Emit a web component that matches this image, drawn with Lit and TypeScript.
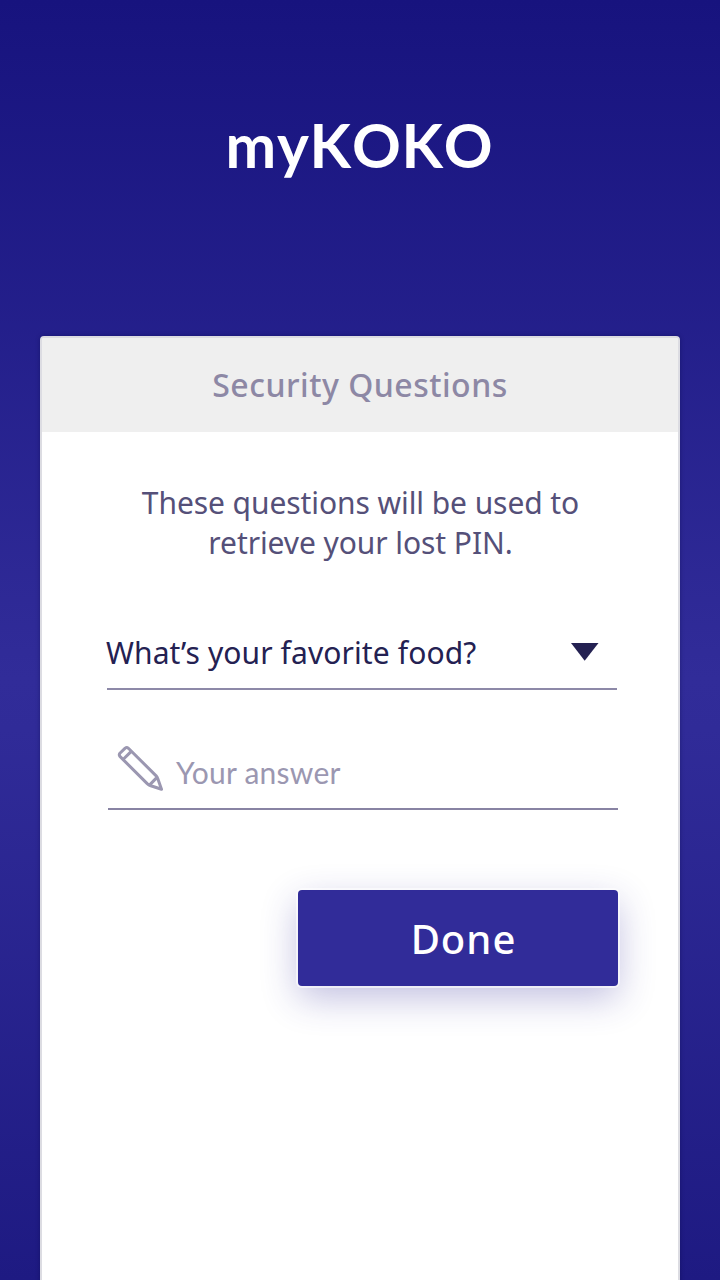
import { LitElement, html, css } from "lit";
import { customElement } from "lit/decorators.js";

@customElement("app-root")
class AppRoot extends LitElement {
  static styles = css`
    :host { display: block; }
    .screen { box-sizing: border-box; width: 720px; height: 1280px; overflow: hidden; display: flex; flex-direction: column; align-items: center; background: linear-gradient(#17137e, #312c99 53%, #302b98 57%, #1e1a82); font-family: "Noto Sans", sans-serif; }
    .brand { box-sizing: border-box; height: 336px; flex: none; margin: 0 0 0 -1px; padding-top: 108px; font: 700 60.5px/74px Lato, sans-serif; letter-spacing: 0.8px; font-kerning: none; color: #fff; }
    .card { box-sizing: border-box; width: 640px; height: 964px; flex: none; border: 2px solid #dcdce2; border-radius: 4px; background: #fff; overflow: hidden; box-shadow: 0 0 4px rgba(0, 0, 60, 0.35); }
    .head { height: 94px; margin: 0; background: #efefef; text-align: center; font-size: 32px; line-height: 93px; font-weight: 500; letter-spacing: 0.5px; color: #8d88a5; }
    .body { padding: 51px 60px 0 65px; }
    .info { margin: 0 2px 0 -2px; text-align: center; font-size: 30px; line-height: 40px; letter-spacing: -0.08px; color: #555079; }
    .select { box-sizing: border-box; width: 510px; height: 57px; margin-top: 70px; border-bottom: 2px solid #8d89a8; display: flex; justify-content: space-between; font-size: 30px; line-height: 40px; letter-spacing: 0.1px; color: #242152; }
    .select span { margin-left: -1px; }
    .caret { width: 28px; height: 18px; margin: 10px 18px 0 0; }
    .answer { box-sizing: border-box; width: 510px; height: 70px; margin: 50px 0 0 1px; border-bottom: 2px solid #8883a3; display: flex; color: #9b97b1; font: 400 30px/40px Lato, sans-serif; letter-spacing: 0.25px; }
    .pencil { width: 48px; height: 48px; margin: 5px 11px 0 9px; }
    .answer span { padding-top: 12px; }
    .done { display: block; width: 320px; height: 96px; margin: 80px 0 0 191px; padding: 2px 0 0 11px; border: 0; border-radius: 4px; background: #312c99; color: #fff; font: 500 40px/94px "Noto Sans", sans-serif; letter-spacing: 1px; box-shadow: 0 0 0 2px rgba(255, 255, 255, 0.6), 0 12px 36px rgba(49, 44, 153, 0.3); }
  `;
  render() {
    return html`<main class="screen">
      <h1 class="brand">myKOKO</h1>
      <section class="card">
        <h2 class="head">Security Questions</h2>
        <div class="body">
          <p class="info">These questions will be used to<br />retrieve your lost PIN.</p>
          <div class="select">
            <span>What’s your favorite food?</span>
            <svg class="caret" viewBox="0 0 28 18"><path d="M0 0H27.5L13.7 17.7Z" fill="#242152" /></svg>
          </div>
          <div class="answer">
            <svg class="pencil" viewBox="0 0 48 48" fill="none" stroke="#9b97b1" stroke-width="3" stroke-linejoin="round" stroke-linecap="round">
              <path d="M2.9 8.3L8.2 3.1Q9.8 1.9 11.4 3.3L38.9 30.6Q40.2 32.1 40.9 34.1L44.5 44.3L33.8 40.8Q31.7 40 30.2 38.6L2.9 11.4Q1.7 9.8 2.9 8.3ZM6.8 13.8L13.5 7.1M33.2 39.4L39.5 32.9" />
            </svg>
            <span>Your answer</span>
          </div>
          <button class="done">Done</button>
        </div>
      </section>
    </main>`;
  }
}
